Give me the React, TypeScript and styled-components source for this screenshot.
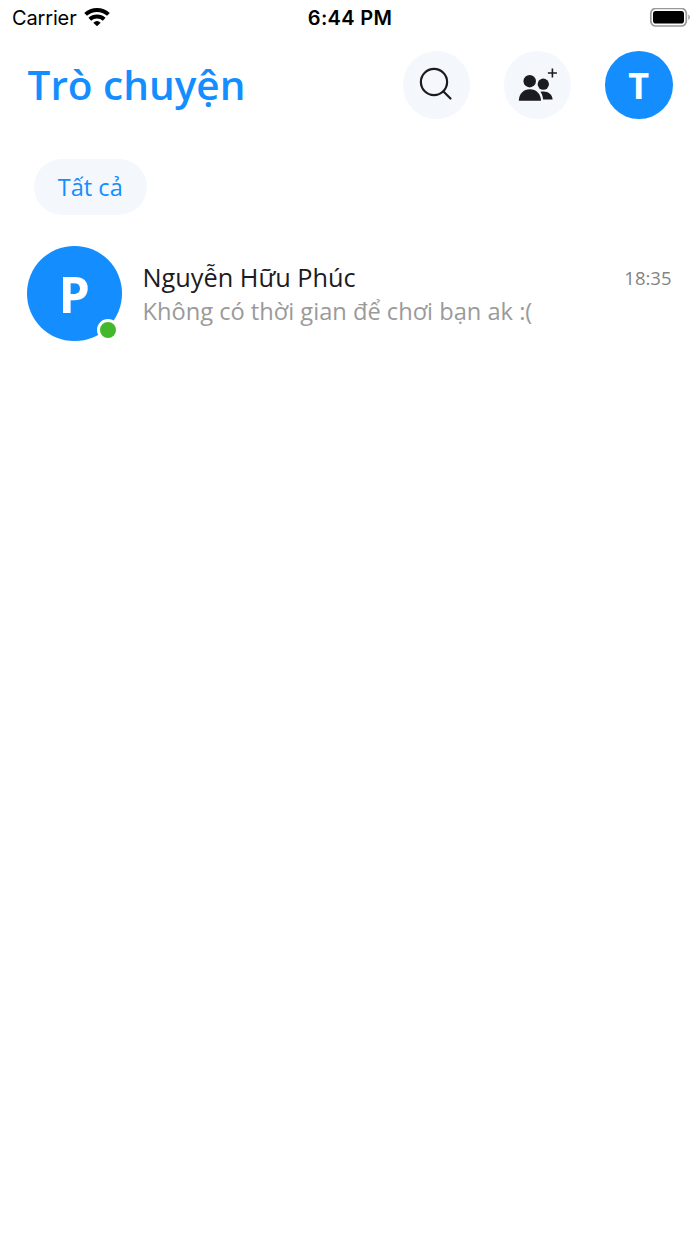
import React from "react";
import styled, { createGlobalStyle } from "styled-components";

const GlobalStyle = createGlobalStyle`
  * { box-sizing: border-box; }
  body { margin: 0; background: #fff; font-family: "Open Sans", "Noto Sans", sans-serif; }
  h1, p { margin: 0; }
`;

const Screen = styled.div`
  display: flex;
  flex-direction: column;
  height: 1244px;
  overflow: hidden;
  background: #fff;
`;

const StatusBar = styled.header`
  display: grid;
  grid-template-columns: 1fr auto 1fr;
  align-items: center;
  height: 36px;
  padding: 0 9px 0 12px;
  color: #000;
  font-family: Inter, sans-serif;
  font-size: 20px;
`;

const Carrier = styled.div`
  display: flex;
  align-items: center;
  gap: 7.5px;
  letter-spacing: -0.15px;
`;

const Clock = styled.div`
  margin-right: 3px;
  font-weight: 600;
  letter-spacing: 0.3px;
`;

const BatterySlot = styled.div`
  display: flex;
  justify-content: flex-end;
`;

const TitleBar = styled.div`
  display: flex;
  align-items: center;
  justify-content: space-between;
  height: 67.5px;
  margin-top: 15px;
  padding: 0 27.5px 0 27.5px;
`;

const Title = styled.h1`
  color: #148eff;
  font-size: 40.5px;
  font-weight: 600;
  line-height: 67px;
`;

const Actions = styled.div`
  display: flex;
  gap: 33.75px;
`;

const RoundButton = styled.button<{ $primary?: boolean }>`
  display: flex;
  align-items: center;
  justify-content: center;
  width: 67.5px;
  height: 67.5px;
  padding: ${(p) => (p.$primary ? "3px 0 0" : "0 1.5px 1px 0")};
  border: 0;
  border-radius: 50%;
  background: ${(p) => (p.$primary ? "#148eff" : "#f4f8fd")};
  color: ${(p) => (p.$primary ? "#fff" : "#1b1b21")};
  font-family: inherit;
  font-size: 36px;
  font-weight: 700;
  line-height: 1;
`;

const Filters = styled.nav`
  display: flex;
  margin-top: 40.5px;
  padding: 0 34px;
`;

const Chip = styled.button`
  width: 112.5px;
  height: 56px;
  padding: 0;
  border: 0;
  border-radius: 28px;
  background: #f4f8fd;
  color: #148eff;
  font-family: inherit;
  font-size: 23.6px;
`;

const ChatRow = styled.article`
  display: flex;
  align-items: center;
  margin-top: 31px;
  padding: 0 28.5px 0 27px;
`;

const Avatar = styled.div`
  position: relative;
  display: flex;
  align-items: center;
  justify-content: center;
  width: 94.5px;
  height: 94.5px;
  padding-top: 2px;
  border-radius: 50%;
  background: #148eff;
  color: #fff;
  font-size: 50px;
  font-weight: 700;
  line-height: 1;
`;

const OnlineDot = styled.span`
  position: absolute;
  right: 3px;
  bottom: 0;
  width: 22px;
  height: 22px;
  border: 3px solid #fff;
  border-radius: 50%;
  background: #43b82c;
`;

const ChatText = styled.div`
  flex: 1;
  margin-left: 21px;
  padding-top: 2px;
`;

const ChatTop = styled.div`
  display: flex;
  align-items: center;
  justify-content: space-between;
  margin-bottom: 1px;
`;

const ChatName = styled.p`
  color: #1b1b21;
  font-size: 25.3px;
  line-height: 33px;
`;

const ChatTime = styled.time`
  color: #848484;
  font-size: 18.5px;
  line-height: 33px;
`;

const Preview = styled.p`
  color: #9a9a9a;
  font-size: 23.65px;
  line-height: 32px;
`;

const WifiIcon = () => (
  <svg width="26" height="22" viewBox="0 0 26 22" fill="none" stroke="#000" strokeWidth="4">
    <path d="M1.6 7.400a16.800 16.800 0 0 1 22.800 0" />
    <path d="M5.800 12.300a10.700 10.700 0 0 1 14.400 0" />
    <path d="M9.300 15.700a5.700 5.700 0 0 1 7.400 0L13 19.300Z" fill="#000" stroke="none" />
  </svg>
);

const BatteryIcon = () => (
  <svg width="42" height="20" viewBox="0 0 42 20">
    <rect x="1.800" y="0.500" width="35.500" height="17.500" rx="5" fill="none" stroke="#999" strokeWidth="1.700" />
    <rect x="4" y="3" width="31" height="12.600" rx="2.800" />
    <path d="M39.300 6.200q3 3 0 6Z" fill="#999" />
  </svg>
);

const SearchIcon = () => (
  <svg width="34" height="34" viewBox="0 0 34 34" fill="none" stroke="currentColor" strokeWidth="2.2" strokeLinecap="round">
    <circle cx="15" cy="15" r="13.1" />
    <path d="m24.5 24.5 7 7" />
  </svg>
);

const AddGroupIcon = () => (
  <svg width="40" height="34" viewBox="0 0 40 34" fill="currentColor">
    <circle cx="12.7" cy="14.2" r="6.2" />
    <circle cx="26.300" cy="17.200" r="5.600" />
    <path d="M1.8 33.800C2 26.800 6.500 22.200 12.900 22.200S23.800 26.800 24 33.800Z" />
    <path d="M23.500 24.800c6-1.600 11.900 1.700 12.100 7.600h-9.500c-.3-3-1.100-5.400-2.600-7.600Z" />
    <path d="M35.400 1.500v9M30.900 6h9" fill="none" stroke="currentColor" strokeWidth="1.600" />
  </svg>
);

export default function App() {
  return (
    <Screen>
      <GlobalStyle />
      <StatusBar>
        <Carrier>Carrier <WifiIcon /></Carrier>
        <Clock>6:44 PM</Clock>
        <BatterySlot><BatteryIcon /></BatterySlot>
      </StatusBar>
      <TitleBar>
        <Title>Trò chuyện</Title>
        <Actions>
          <RoundButton aria-label="Tìm kiếm"><SearchIcon /></RoundButton>
          <RoundButton aria-label="Tạo nhóm"><AddGroupIcon /></RoundButton>
          <RoundButton $primary>T</RoundButton>
        </Actions>
      </TitleBar>
      <Filters>
        <Chip>Tất cả</Chip>
      </Filters>
      <ChatRow>
        <Avatar>P<OnlineDot /></Avatar>
        <ChatText>
          <ChatTop>
            <ChatName>Nguyễn Hữu Phúc</ChatName>
            <ChatTime>18:35</ChatTime>
          </ChatTop>
          <Preview>Không có thời gian để chơi bạn ak :(</Preview>
        </ChatText>
      </ChatRow>
    </Screen>
  );
}
